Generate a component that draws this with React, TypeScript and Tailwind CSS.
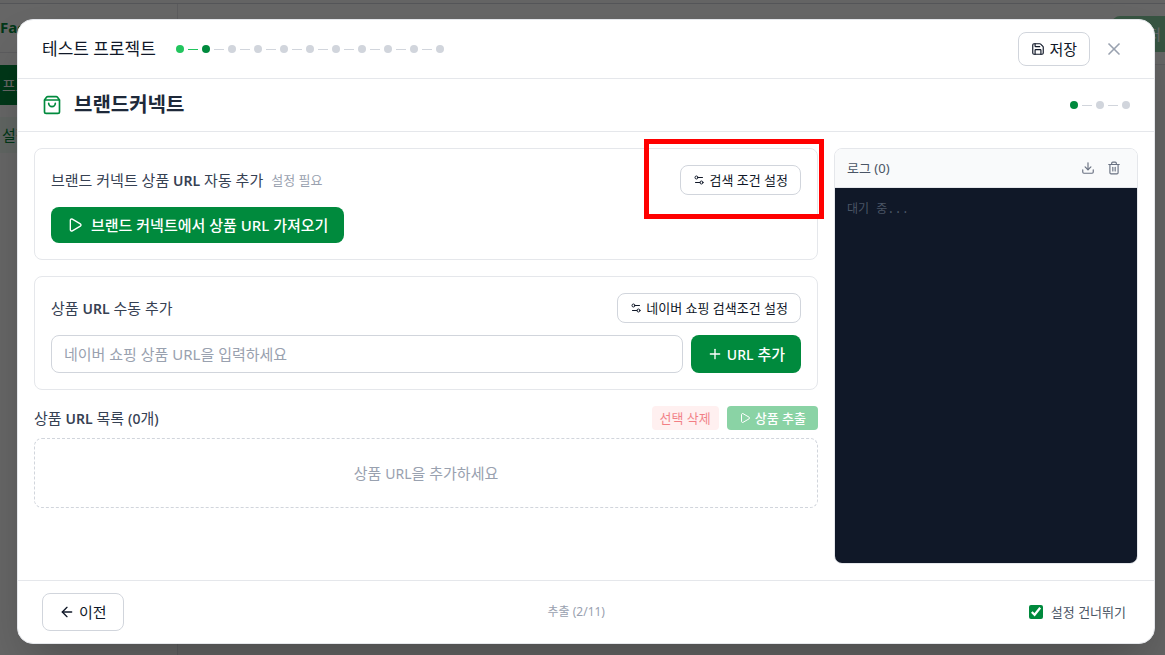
import { useState } from 'react';
import { ArrowLeft, Download, Play, Plus, Save, Settings2, ShoppingBag, Trash2, X } from 'lucide-react';

interface StepDotsProps {
    total: number;
    current: number;
}

const outlineButton = 'flex items-center rounded-lg border border-gray-300 bg-white text-gray-900 hover:bg-gray-50';
const latin = 'text-sm leading-4 font-semibold';

const StepDots = ({ total, current }: StepDotsProps) => (
    <div className="flex items-center gap-1">
        {Array.from({ length: total }, (_, i) => {
            const color = i < current ? 'bg-[#22c55e]' : i === current ? 'bg-[#008a3d]' : 'bg-gray-300';
            return (
                <div key={i} className="flex items-center gap-1">
                    {i > 0 && <span className={`h-px w-2.5 ${i <= current ? 'bg-[#22c55e]' : 'bg-gray-300'}`} />}
                    <span className={`h-2 w-2 rounded-full ${color}`} />
                </div>
            );
        })}
    </div>
);

const PageBackground = () => (
    <div className="absolute inset-0 flex flex-col overflow-hidden bg-gray-50" aria-hidden="true">
        <div className="h-1 shrink-0 border-b border-gray-300" />
        <div className="flex flex-1">
            <aside className="w-[178px] shrink-0 border-r border-gray-200 bg-white">
                <div className="h-[49px] border-b border-gray-200 pt-3 text-[15px] font-bold text-[#008a3d]">Facto</div>
                <div className="mt-3 h-10 bg-[#008a3d] pl-0.5 text-[15px] leading-10 text-white">프로젝트</div>
                <div className="mt-3 h-9 bg-green-50 pl-0.5 text-[15px] leading-9 text-[#008a3d]">설정</div>
            </aside>
            <div className="flex-1">
                <div className="flex h-[61px] justify-end border-b border-gray-200 bg-white pt-3">
                    <div className="h-9 w-[53px] rounded-l-lg bg-[#8ad3a5] pr-1 text-right text-[15px] leading-9 text-white">저</div>
                </div>
            </div>
        </div>
    </div>
);

const LogPanel = () => (
    <section className="flex w-[304px] shrink-0 flex-col overflow-hidden rounded-lg border border-gray-200">
        <div className="flex items-center justify-between border-b border-gray-200 bg-gray-50 px-3 py-2">
            <h3 className="text-[13px] leading-4 text-gray-600">로그 (0)</h3>
            <div className="flex items-center gap-1 text-gray-500">
                <button type="button" aria-label="로그 다운로드" className="p-1">
                    <Download size={14} />
                </button>
                <button type="button" aria-label="로그 삭제" className="p-1">
                    <Trash2 size={14} />
                </button>
            </div>
        </div>
        <div className="flex-1 bg-gray-900 p-3 font-['Liberation_Mono','Noto_Sans_CJK_KR',monospace] text-xs leading-5 text-gray-600">
            대기 중...
        </div>
    </section>
);

const App = () => {
    const [url, setUrl] = useState('');
    const [skipSettings, setSkipSettings] = useState(true);

    return (
        <div className="relative flex min-h-screen pt-[19px] pr-2.5 pb-[11px] pl-[17px] font-['Noto_Sans','Noto_Sans_CJK_KR',sans-serif]">
            <PageBackground />
            <div className="absolute inset-0 bg-black/60" />

            <div role="dialog" aria-label="테스트 프로젝트" className="relative flex flex-1 flex-col overflow-hidden rounded-2xl border border-gray-200 bg-white shadow-2xl">
                <header className="flex items-center justify-between border-b border-gray-200 px-6 py-3">
                    <div className="flex items-center gap-5">
                        <h1 className="text-[17px] leading-6 text-gray-900">테스트 프로젝트</h1>
                        <StepDots total={11} current={1} />
                    </div>
                    <div className="flex items-center gap-2">
                        <button type="button" className={`${outlineButton} gap-1 px-3 py-1.5 text-[15px] leading-5`}>
                            <Save size={14} />
                            저장
                        </button>
                        <button type="button" aria-label="닫기" className="p-1.5 text-gray-400">
                            <X size={20} />
                        </button>
                    </div>
                </header>

                <div className="flex items-center justify-between border-b border-gray-200 px-6 py-3">
                    <div className="flex items-center gap-3">
                        <ShoppingBag size={20} className="text-[#008a3d]" />
                        <h2 className="text-xl leading-7 font-bold text-gray-800">브랜드커넥트</h2>
                    </div>
                    <StepDots total={3} current={0} />
                </div>

                <main className="flex flex-1 gap-4 p-4">
                    <div className="flex min-w-0 flex-1 flex-col gap-4">
                        <section className="rounded-lg border border-gray-200 p-4">
                            <div className="mb-3 flex items-center justify-between">
                                <div className="flex items-center gap-2">
                                    <h3 className="text-[15px] leading-5 text-gray-700">
                                        브랜드 커넥트 상품 <span className={latin}>URL</span> 자동 추가
                                    </h3>
                                    <span className="text-[13px] leading-4 text-gray-400">설정 필요</span>
                                </div>
                                {/* highlighted area around the search settings button */}
                                <div className="relative">
                                    <button type="button" className={`${outlineButton} gap-1 px-3 py-1.5 text-[13px] leading-4`}>
                                        <Settings2 size={12} />
                                        검색 조건 설정
                                    </button>
                                    <div className="pointer-events-none absolute -top-[26px] -right-[23px] h-20 w-[180px] border-[5px] border-[#ff0000]" />
                                </div>
                            </div>
                            <button type="button" className="flex items-center gap-2 rounded-lg bg-[#008a3d] px-4 py-2 text-[15px] leading-5 font-medium text-white">
                                <Play size={16} />
                                브랜드 커넥트에서 상품 URL 가져오기
                            </button>
                        </section>

                        <section className="rounded-lg border border-gray-200 p-4">
                            <div className="mb-3 flex items-center justify-between">
                                <label htmlFor="product-url" className="text-[15px] leading-5 text-gray-700">
                                    상품 <span className={latin}>URL</span> 수동 추가
                                </label>
                                <button type="button" className={`${outlineButton} gap-1 px-3 py-1.5 text-[13px] leading-4`}>
                                    <Settings2 size={12} />
                                    네이버 쇼핑 검색조건 설정
                                </button>
                            </div>
                            <div className="flex gap-2">
                                <input
                                    id="product-url"
                                    type="text"
                                    value={url}
                                    onChange={e => setUrl(e.target.value)}
                                    placeholder="네이버 쇼핑 상품 URL을 입력하세요"
                                    className="h-[38px] min-w-0 flex-1 rounded-lg border border-gray-300 px-3 text-[15px] placeholder:text-gray-400"
                                />
                                <button type="button" className="flex items-center gap-1 rounded-lg bg-[#008a3d] px-4 text-[15px] leading-5 font-medium text-white">
                                    <Plus size={16} />
                                    <span>
                                        <span className="text-sm leading-4">URL</span> 추가
                                    </span>
                                </button>
                            </div>
                        </section>

                        <section>
                            <div className="mb-2 flex items-center justify-between">
                                <h3 className="text-[15px] leading-5 text-gray-700">
                                    상품 <span className={latin}>URL</span> 목록 <span className="text-sm leading-4 font-medium">(0</span>개<span className="text-sm leading-4 font-medium">)</span>
                                </h3>
                                <div className="flex gap-2">
                                    <button type="button" disabled className="rounded bg-red-100 px-2 py-1 text-[13px] leading-4 text-red-600 opacity-50">
                                        선택 삭제
                                    </button>
                                    <button type="button" disabled className="flex items-center gap-1 rounded bg-[#8ad3a5] px-3 py-1 text-[13px] leading-4 font-medium text-white">
                                        <Play size={12} />
                                        상품 추출
                                    </button>
                                </div>
                            </div>
                            <div className="rounded-lg border border-dashed border-gray-300 py-6 text-center text-[15px] leading-5 text-gray-400">
                                상품 <span className="text-sm leading-4">URL</span>을 추가하세요
                            </div>
                        </section>
                    </div>

                    <LogPanel />
                </main>

                <footer className="flex items-center justify-between border-t border-gray-200 px-6 py-3">
                    <button type="button" className={`${outlineButton} gap-1 px-4 py-2 text-[15px] leading-5`}>
                        <ArrowLeft size={16} />
                        이전
                    </button>
                    <span className="text-xs leading-4 text-gray-400">추출 (2/11)</span>
                    <label className="flex items-center gap-2 pr-1 text-[13px] leading-4 text-gray-600">
                        <input
                            type="checkbox"
                            checked={skipSettings}
                            onChange={e => setSkipSettings(e.target.checked)}
                            className="h-3.5 w-3.5 accent-[#008a3d]"
                        />
                        설정 건너뛰기
                    </label>
                </footer>
            </div>
        </div>
    );
};

export default App;
